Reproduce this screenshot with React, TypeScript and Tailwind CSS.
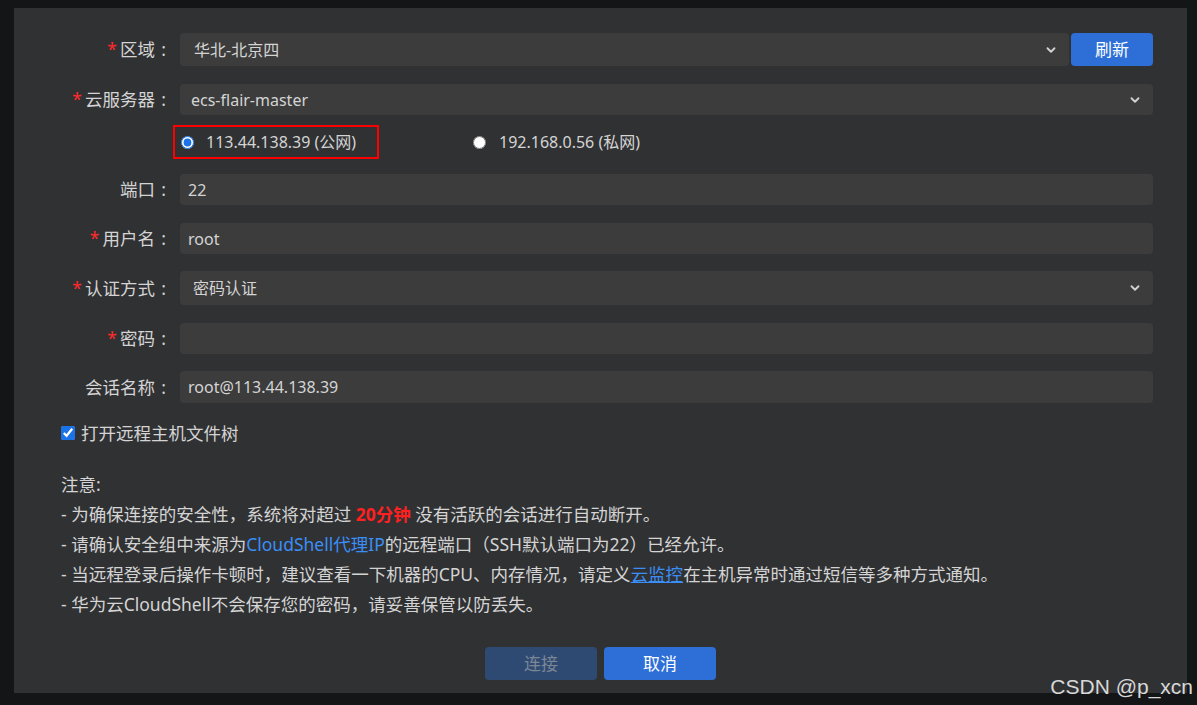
import { ChevronDown } from 'lucide-react'

const font = { fontFamily: '"Noto Sans", "Noto Sans CJK SC", sans-serif' }

function Label({ text, required }: { text: string; required?: boolean }) {
  return (
    <div className="w-[158px] shrink-0 text-right text-[17.5px] text-[#d4d4d4]">
      {required && <span className="text-[#ff2b2b] mr-[3px]">*</span>}
      {text}
      <span className="inline-block w-[17px] text-center">:</span>
    </div>
  )
}

function Field({ value, select, h = 'h-[31px]', pad = 'pl-[8px]' }: { value: string; select?: boolean; h?: string; pad?: string }) {
  return (
    <div className={`flex-1 ${h} ${pad} pr-[11px] rounded-[4px] bg-[#3c3c3c] flex items-center justify-between text-[16px] text-[#d4d4d4]`}>
      <span>{value}</span>
      {select && <ChevronDown className="w-[14px] h-[14px] text-[#d0d0d0]" strokeWidth={3.2} />}
    </div>
  )
}

export default function App() {
  return (
    <div className="relative w-[1197px] h-[705px] bg-[#141517] pt-[8px] pl-[14px]" style={font}>
      <div className="w-[1173px] h-[685px] bg-[#303133] pt-[25px] pr-[34px]">
        {/* 区域 */}
        <div className="flex items-center">
          <Label text="区域" required />
          <div className="ml-[8px] flex-1 flex gap-[2px]">
            <Field value="华北-北京四" select h="h-[33px]" pad="pl-[14px]" />
            <button className="w-[82px] h-[33px] rounded-[4px] bg-[#2d6fd6] text-white text-[17px]">刷新</button>
          </div>
        </div>

        {/* 云服务器 */}
        <div className="flex items-center mt-[18px]">
          <Label text="云服务器" required />
          <div className="ml-[8px] flex-1 flex">
            <Field value="ecs-flair-master" select pad="pl-[11px]" />
          </div>
        </div>

        {/* IP 选择 */}
        <div className="flex items-center mt-[10px] h-[34px] pl-[159px]">
          <label className="h-[34px] w-[206px] border-2 border-[#ff0000] flex items-center pl-[6px] gap-[12px] text-[16px] text-[#d4d4d4]">
            <input type="radio" name="ip" defaultChecked className="w-[13px] h-[13px] accent-[#1a73e8]" />
            113.44.138.39 (公网)
          </label>
          <label className="ml-[94px] flex items-center gap-[13px] text-[16px] text-[#d4d4d4]">
            <input type="radio" name="ip" className="w-[13px] h-[13px]" />
            192.168.0.56 (私网)
          </label>
        </div>

        {/* 端口 */}
        <div className="flex items-center mt-[15px]">
          <Label text="端口" />
          <div className="ml-[8px] flex-1 flex"><Field value="22" /></div>
        </div>

        <div className="flex items-center mt-[18px]">
          <Label text="用户名" required />
          <div className="ml-[8px] flex-1 flex"><Field value="root" /></div>
        </div>

        <div className="flex items-center mt-[17px]">
          <Label text="认证方式" required />
          <div className="ml-[8px] flex-1 flex"><Field value="密码认证" select h="h-[34px]" pad="pl-[13px]" /></div>
        </div>

        <div className="flex items-center mt-[18px]">
          <Label text="密码" required />
          <div className="ml-[8px] flex-1 flex"><Field value="" /></div>
        </div>

        <div className="flex items-center mt-[17px]">
          <Label text="会话名称" />
          <div className="ml-[8px] flex-1 flex"><Field value="root@113.44.138.39" h="h-[32px]" /></div>
        </div>

        {/* 文件树 */}
        <label className="flex items-center gap-[6px] mt-[20px] ml-[47px] h-[20px] text-[17.5px] text-[#d4d4d4]">
          <input type="checkbox" defaultChecked className="w-[14px] h-[14px] accent-[#1a73e8]" />
          打开远程主机文件树
        </label>

        {/* 注意 */}
        <div className="mt-[29px] ml-[47px] text-[17.5px] leading-[30px] text-[#d4d4d4]">
          <p className="leading-[24px] mb-[3px]">注意:</p>
          <p>- 为确保连接的安全性，系统将对超过 <span className="text-[#ff2020] font-bold">20分钟</span> 没有活跃的会话进行自动断开。</p>
          <p>- 请确认安全组中来源为<span className="text-[#3a8ef6]">CloudShell代理IP</span>的远程端口（SSH默认端口为22）已经允许。</p>
          <p>- 当远程登录后操作卡顿时，建议查看一下机器的CPU、内存情况，请定义<span className="text-[#3a8ef6] underline">云监控</span>在主机异常时通过短信等多种方式通知。</p>
          <p>- 华为云CloudShell不会保存您的密码，请妥善保管以防丢失。</p>
        </div>

        {/* 按钮 */}
        <div className="flex justify-center gap-[7px] mt-[28px] pl-[34px]">
          <button disabled className="w-[112px] h-[33px] rounded-[4px] bg-[#2f4a72] text-[#7c8796] text-[17px]">连接</button>
          <button className="w-[112px] h-[33px] rounded-[4px] bg-[#2d6fd6] text-white text-[17px]">取消</button>
        </div>
      </div>

      <div className="absolute right-[4px] bottom-[8px] text-[21px] leading-none text-[#d8d8d8]" style={{ fontFamily: '"Liberation Sans", Arial, sans-serif' }}>
        CSDN @p_xcn
      </div>
    </div>
  )
}
